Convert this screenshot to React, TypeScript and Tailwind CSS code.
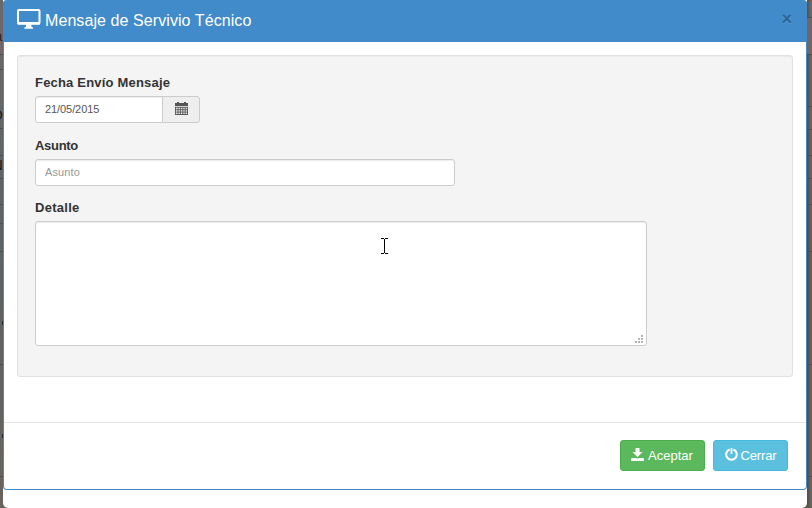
import React from "react";

const label = "block h-[18px] w-fit text-[13px] font-bold leading-[18px] text-[#333]";
const field =
  "block border border-[#ccc] bg-white px-[9px] pb-[2px] text-[11px] text-[#555] shadow-[inset_0_1px_1px_rgba(0,0,0,0.075)] outline-none placeholder:text-[#999]";

function MonitorIcon() {
  return (
    <svg width="24" height="21" viewBox="0 0 24 21" fill="none" className="mt-[9px] shrink-0">
      <rect x="1" y="1" width="21.5" height="13.5" rx="0.8" stroke="#fff" strokeWidth="2" />
      <path d="M9 15h5.4v2.8l1.6.7v1.3H7.4v-1.3l1.6-.7z" fill="#fff" />
      <path d="M.6 14.3h22.3" stroke="#fff" strokeWidth="2.6" />
    </svg>
  );
}

function CalendarIcon() {
  return (
    <svg width="13" height="13" viewBox="0 0 13 13" fill="none" className="-mt-[2px]">
      <path d="M0 1h2V0h2v1h5V0h2v1h2v3H0z" fill="#555" />
      <path d="M.5 5v7.5h12V5M0 5.3h13M0 7.7h13M0 10.1h13M0 12.5h13M3 5v7.5M5.4 5v7.5M7.8 5v7.5M10.2 5v7.5" stroke="#555" strokeWidth="0.9" />
    </svg>
  );
}

function SaveIcon() {
  return (
    <svg width="13" height="13" viewBox="0 0 13 13" fill="#fff" className="-mt-[2px] -ml-px shrink-0">
      <path d="M4.5 0h4v4h3L6.5 9 1.5 4h3z" />
      <path d="M.2 10h4.3l2 .6 2-.6h4.3v3H.2z" />
    </svg>
  );
}

function PowerIcon() {
  return (
    <svg width="13" height="13" viewBox="0 0 13 13" fill="none" stroke="#fff" strokeWidth="2" className="-mt-[2px] shrink-0">
      <path d="M4.6 1.5a5.3 5.3 0 1 0 3.8 0" />
      <path d="M6.5 0v6" strokeWidth="1.8" />
    </svg>
  );
}

export default function App() {
  return (
    <div className="relative flex h-[508px] w-[812px] overflow-hidden bg-[#645f59] font-['Liberation_Sans',Arial,sans-serif]">
      <div className="relative h-full w-[3px] shrink-0 overflow-hidden bg-linear-to-b from-[#696969] via-[#5d6265] to-[#69635e] text-[15px] leading-[16px] text-[#171b20]">
        <div className="absolute top-[14px] h-[40px] w-full bg-[#706668]" />
        <span className="absolute top-[28px] -left-[6px] text-[#35242a]">a</span>
        <span className="absolute top-[107px] -left-[8px]">D</span>
        <span className="absolute top-[157px] -left-[8px]">N</span>
        {["top-[54px]", "top-[69px]", "top-[128px]", "top-[155px]", "top-[178px]", "top-[204px]", "top-[223px]", "top-[251px]", "top-[364px]", "top-[476px]"].map((t) => (
          <i key={t} className={`absolute h-px w-full bg-[#4b4f52] ${t}`} />
        ))}
        <i className="absolute top-[321px] right-0 h-[4px] w-[1px] bg-[#252b30]" />
        <i className="absolute top-[434px] right-0 h-[4px] w-[1px] bg-[#252b30]" />
      </div>

      <main className="flex h-[508px] w-[804px] shrink-0 flex-col rounded-b-[5px] bg-white">
        <section className="flex h-[490px] flex-col rounded-[4px] border border-t-0 border-[#428bca] bg-white">
          <header className="-mx-px flex h-[42px] shrink-0 rounded-t-[4px] bg-[#428bca] pl-[14px] text-white">
            <MonitorIcon />
            <h1 className="ml-[4px] pt-[11px] text-[16px] leading-[20px] tracking-[0.08px] whitespace-nowrap">Mensaje de Servivio Técnico</h1>
            <button className="mt-[9px] mr-[15px] ml-auto h-[20px] text-[18px] leading-[20px] font-bold text-[#2d6596] [text-shadow:0_1px_0_#5b9ed4]">×</button>
          </header>
          <div className="h-[380px] shrink-0 px-[13px] pt-[13px]">
            <form className="h-[322px] w-[776px] rounded-[3px] border border-[#e1e1e1] bg-[#f4f4f4] px-[17px] pt-[18px] shadow-[inset_0_1px_1px_rgba(0,0,0,0.05)]">
              <label className={`${label} tracking-[0.19px]`}>Fecha Envío Mensaje</label>
              <div className="mt-[4px] flex h-[27px]">
                <input className={`${field} h-[27px] w-[128px] rounded-l-[3px] tracking-[-0.08px]`} defaultValue="21/05/2015" />
                <button type="button" className="-ml-px flex h-[27px] w-[38px] items-center justify-center rounded-r-[3px] border border-[#ccc] bg-[#eee]">
                  <CalendarIcon />
                </button>
              </div>
              <label className={`${label} mt-[14px] tracking-[-0.3px]`}>Asunto</label>
              <input className={`${field} mt-[4px] h-[27px] w-[420px] rounded-[3px] tracking-[0.1px]`} placeholder="Asunto" />
              <label className={`${label} mt-[13px] tracking-[0.28px]`}>Detalle</label>
              <div className="relative mt-[4px] h-[125px] w-[612px]">
                <textarea className={`${field} h-[125px] w-[612px] resize-none rounded-[3px]`} />
                <svg width="8" height="8" viewBox="0 0 8 8" fill="#b5b5b5" className="absolute right-[4px] bottom-[3px]">
                  <path d="M6 0h2v2H6zM3 3h2v2H3zM6 3h2v2H6zM0 6h2v2H0zM3 6h2v2H3zM6 6h2v2H6z" />
                </svg>
              </div>
            </form>
          </div>
          <footer className="flex h-[67px] shrink-0 justify-end gap-[8px] border-t border-[#e5e5e5] pt-[17px] pr-[18px] text-[13px] text-white">
            <button className="flex h-[31px] w-[85px] items-center justify-center gap-[4px] rounded-[3px] border border-[#4cae4c] bg-[#5cb85c]">
              <SaveIcon />
              Aceptar
            </button>
            <button className="flex h-[31px] w-[75px] items-center justify-center gap-[3px] rounded-[3px] border border-[#46b8da] bg-[#5bc0de] tracking-[-0.15px]">
              <PowerIcon />
              Cerrar
            </button>
          </footer>
        </section>
      </main>

      <div className="relative h-full w-[5px] shrink-0 bg-linear-to-b from-[#65696c] via-[#626059] to-[#69635e] shadow-[inset_2px_0_2px_rgba(0,0,0,0.2)]">
        <div className="absolute top-[17px] h-[37px] w-full bg-[#706668]" />
        {["top-[17px]", "top-[54px]", "top-[106px]", "top-[129px]", "top-[155px]", "top-[178px]", "top-[204px]", "top-[251px]", "top-[364px]", "top-[476px]"].map((t) => (
          <i key={t} className={`absolute h-px w-full bg-[#4b4f52] ${t}`} />
        ))}
      </div>

      <svg width="7" height="16" viewBox="0 0 7 16" fill="#000" className="absolute top-[238px] left-[381px]">
        <path d="M0 0h3v1H0zM4 0h3v1H4zM3 1h1v14H3zM0 15h3v1H0zM4 15h3v1H4z" />
      </svg>
    </div>
  );
}
